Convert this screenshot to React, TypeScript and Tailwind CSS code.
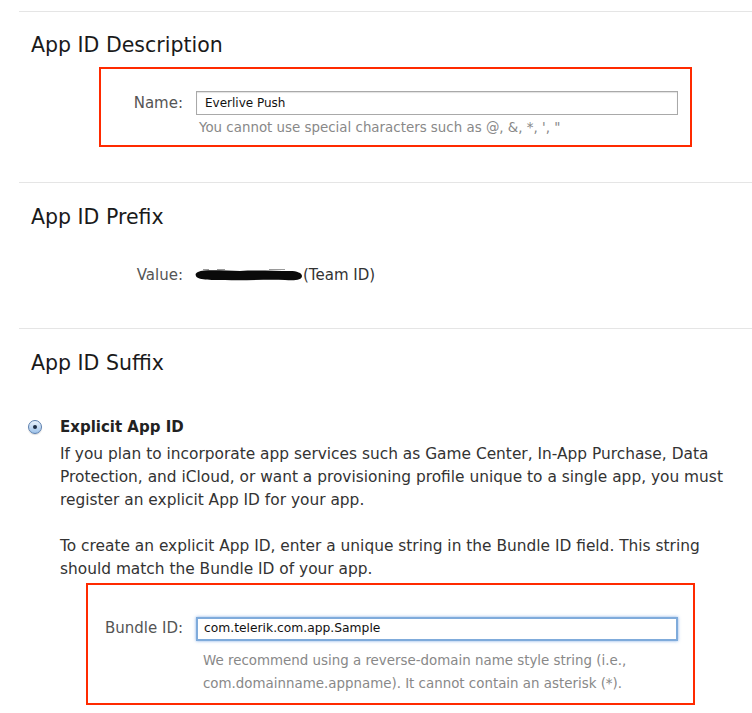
import React from 'react'

const font = { fontFamily: '"DejaVu Sans", Verdana, sans-serif' }

function Radio() {
  return (
    <span className="flex h-[14px] w-[14px] items-center justify-center rounded-full border border-[#5b7fae] bg-gradient-to-b from-[#e9f2fc] to-[#9fc3ea] shadow-[0_1px_1px_rgba(0,0,0,0.15)]">
      <span className="h-[4px] w-[4px] rounded-full bg-[#1d2d44]" />
    </span>
  )
}

function Redacted() {
  return (
    <svg width="108" height="14" viewBox="0 0 108 14" className="shrink-0">
      <path
        d="M3 4 C10 1 30 3 45 3 C60 2 80 3 95 3 C102 3 107 5 107 8 C107 12 100 13 90 12 C70 11 50 13 30 12 C15 12 2 12 1 8 C0 6 1 5 3 4 Z"
        fill="#0a0a0a"
      />
      <path d="M8 1.5 L14 1.5 M22 1.5 L30 1.5 M74 1.5 L90 1.5" stroke="#9a9a9a" strokeWidth="1" />
    </svg>
  )
}

export default function App() {
  return (
    <div className="h-[713px] w-[752px] overflow-hidden bg-white text-[#222]" style={font}>
      <div className="pt-[11px]">
        {/* App ID Description */}
        <section className="ml-[19px] border-t border-[#e5e5e5] pb-[35px]">
          <h2 className="ml-[12px] mt-[21px] text-[20.5px] leading-[24px] text-[#1a1a1a]">App ID Description</h2>
          <div className="ml-[80px] mt-[10px] h-[80px] w-[593px] border-2 border-[#ff2a00] pt-[22px]">
            <div className="flex items-center">
              <label className="w-[82px] text-right text-[15px] text-[#555]">Name:</label>
              <div className="ml-[13px] flex h-[24px] w-[482px] items-center border border-[#a9a9a9] bg-white pl-[8px] text-[12px] text-[#111] shadow-[inset_0_1px_1px_rgba(0,0,0,0.12)]">
                Everlive Push
              </div>
            </div>
            <p className="ml-[98px] mt-[5px] text-[13.4px] leading-[16px] text-[#888]">
              You cannot use special characters such as @, &amp;, *, ', "
            </p>
          </div>
        </section>

        {/* App ID Prefix */}
        <section className="ml-[19px] border-t border-[#e5e5e5]">
          <h2 className="ml-[12px] mt-[22px] text-[20.5px] leading-[24px] text-[#1a1a1a]">App ID Prefix</h2>
          <div className="mt-[34px] flex h-[24px] items-center">
            <span className="w-[164px] text-right text-[15px] text-[#555]">Value:</span>
            <span className="ml-[12px] flex items-center text-[15px] text-[#333]">
              <Redacted />
              (Team ID)
            </span>
          </div>
          <div className="h-[41px]" />
        </section>

        {/* App ID Suffix */}
        <section className="ml-[19px] border-t border-[#e5e5e5]">
          <h2 className="ml-[12px] mt-[22px] text-[20.5px] leading-[24px] text-[#1a1a1a]">App ID Suffix</h2>
          <div className="mt-[41px] flex items-center">
            <div className="ml-[9px]">
              <Radio />
            </div>
            <span className="ml-[18px] text-[15px] font-bold text-[#222]">Explicit App ID</span>
          </div>
          <div className="ml-[41px] mt-[4px] whitespace-nowrap text-[15.4px] leading-[23px] text-[#333]">
            <p>
              If you plan to incorporate app services such as Game Center, In-App Purchase, Data
              <br />
              Protection, and iCloud, or want a provisioning profile unique to a single app, you must
              <br />
              register an explicit App ID for your app.
            </p>
            <p className="mt-[23px]">
              To create an explicit App ID, enter a unique string in the Bundle ID field. This string
              <br />
              should match the Bundle ID of your app.
            </p>
          </div>
          <div className="ml-[67px] mt-[2px] h-[122px] w-[609px] border-2 border-[#ff2a00] pt-[32px]">
            <div className="flex items-center">
              <label className="w-[95px] text-right text-[15px] text-[#555]">Bundle ID:</label>
              <div className="ml-[13px] flex h-[24px] w-[482px] items-center border-2 border-[#7fabdb] bg-white pl-[6px] text-[12.3px] text-[#111] shadow-[0_0_3px_rgba(80,140,220,0.7)]">
                com.telerik.com.app.Sample
              </div>
            </div>
            <p className="ml-[115px] mt-[8px] text-[13.4px] leading-[23px] text-[#888]">
              We recommend using a reverse-domain name style string (i.e.,
              <br />
              com.domainname.appname). It cannot contain an asterisk (*).
            </p>
          </div>
        </section>
      </div>
    </div>
  )
}
